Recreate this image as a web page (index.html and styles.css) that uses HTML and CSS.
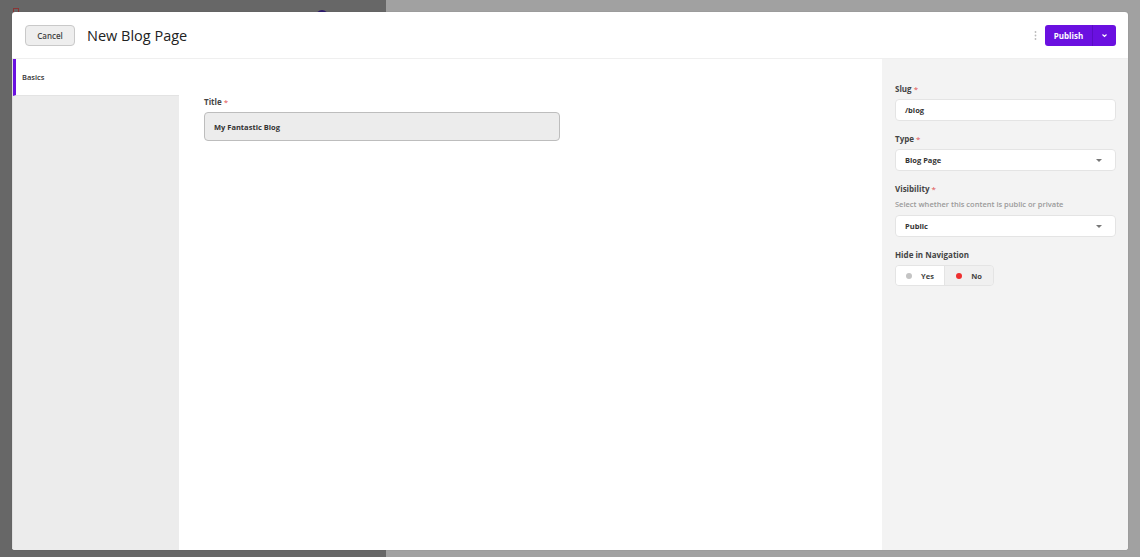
FILE: index.html
```html
<!DOCTYPE html>
<html lang="en">
<head>
  <meta charset="UTF-8" />
  <title>New Blog Page</title>
  <link rel="stylesheet" href="styles.css">
</head>
<body>

  <div class="backdrop">
    <div class="backdrop-left">
      <span class="bg-logo"></span>
      <span class="bg-avatar"></span>
    </div>
    <div class="backdrop-right"></div>
  </div>

  <div class="modal">
    <div class="modal-header">
      <button class="btn-cancel">Cancel</button>
      <h1>New Blog Page</h1>
      <div class="header-actions">
        <span class="kebab">
          <svg width="3" height="9" viewBox="0 0 3 9"><circle cx="1.5" cy="1" r="0.9" fill="#bbb"/><circle cx="1.5" cy="4.5" r="0.9" fill="#bbb"/><circle cx="1.5" cy="8" r="0.9" fill="#bbb"/></svg>
        </span>
        <div class="publish">
          <button class="publish-main">Publish</button>
          <button class="publish-caret">
            <svg width="7" height="5" viewBox="0 0 7 5"><path d="M1.5 1.5 L3.5 3.5 L5.5 1.5" stroke="#fff" stroke-width="1.1" fill="none"/></svg>
          </button>
        </div>
      </div>
    </div>

    <div class="modal-body">
      <div class="tabs">
        <div class="tab active">Basics</div>
      </div>

      <div class="main">
        <label class="field-label">Title <span class="req">*</span></label>
        <div class="title-input">My Fantastic Blog</div>
      </div>

      <div class="side">
        <div class="field">
          <label class="field-label">Slug <span class="req">*</span></label>
          <div class="input">/blog</div>
        </div>

        <div class="field">
          <label class="field-label">Type <span class="req">*</span></label>
          <div class="input select">Blog Page <span class="caret"></span></div>
        </div>

        <div class="field">
          <label class="field-label">Visibility <span class="req">*</span></label>
          <p class="help">Select whether this content is public or private</p>
          <div class="input select">Public <span class="caret"></span></div>
        </div>

        <div class="field">
          <label class="field-label">Hide in Navigation</label>
          <div class="toggle">
            <div class="toggle-opt"><span class="dot grey"></span>Yes</div>
            <div class="toggle-opt selected"><span class="dot red"></span>No</div>
          </div>
        </div>
      </div>
    </div>
  </div>

</body>
</html>
```

FILE: styles.css
```css
body {
  margin: 0;
  font-family: 'Open Sans', 'Noto Sans', sans-serif;
  color: #333;
  width: 1140px;
  height: 557px;
  overflow: hidden;
  position: relative;
}

.backdrop {
  display: flex;
  height: 557px;
}

.backdrop-left {
  width: 386px;
  background: #676767;
  position: relative;
}

.backdrop-right {
  flex: 1;
  background: #a1a1a1;
}

.bg-logo {
  position: absolute;
  left: 13px;
  top: 8px;
  width: 4px;
  height: 6px;
  border: 1px solid #8a3535;
}

.bg-avatar {
  position: absolute;
  left: 316px;
  top: 10px;
  width: 12px;
  height: 12px;
  border-radius: 50%;
  background: #2e1a6e;
}

.modal {
  position: absolute;
  left: 12px;
  top: 12px;
  width: 1116px;
  height: 538px;
  background: #fff;
  border-radius: 3px;
  display: flex;
  flex-direction: column;
  overflow: hidden;
  box-shadow: 0 0 1px rgba(0,0,0,0.3);
}

.modal-header {
  height: 46px;
  flex-shrink: 0;
  display: flex;
  align-items: center;
  padding: 0 12px 0 13px;
  border-bottom: 1px solid #efefef;
}

.btn-cancel {
  width: 50px;
  height: 21px;
  background: #eeeeee;
  border: 1px solid #c9c9c9;
  border-radius: 4px;
  font-family: inherit;
  font-size: 8px;
  font-weight: 600;
  color: #444;
  cursor: pointer;
  padding: 0;
}

h1 {
  margin: 0 0 0 12px;
  font-size: 14.5px;
  font-weight: 500;
  color: #222;
}

.header-actions {
  margin-left: auto;
  display: flex;
  align-items: center;
}

.kebab {
  display: flex;
  margin-right: 8px;
}

.publish {
  display: flex;
  height: 21px;
  background: #6a10e0;
  border-radius: 3px;
  overflow: hidden;
}

.publish button {
  background: none;
  border: none;
  color: #fff;
  font-family: inherit;
  font-size: 8px;
  font-weight: 700;
  cursor: pointer;
  padding: 0;
}

.publish-main {
  width: 48px;
  border-right: 1px solid #5a0cc4 !important;
}

.publish-caret {
  width: 23px;
  display: flex;
  align-items: center;
  justify-content: center;
}

.modal-body {
  flex: 1;
  display: flex;
}

.tabs {
  width: 167px;
  box-sizing: border-box;
  background: #ececec;
  flex-shrink: 0;
  border-left: 1px solid #e0e0e0;
}

.tab {
  height: 36px;
  display: flex;
  align-items: center;
  padding-left: 6px;
  font-size: 7.5px;
  font-weight: 600;
  color: #333;
  background: #fff;
  border-left: 3px solid #6a10e0;
  border-bottom: 1px solid #e3e3e3;
}

.main {
  flex: 1;
  padding: 37px 0 0 25px;
}

.field-label {
  display: block;
  font-size: 8px;
  font-weight: 700;
  color: #444;
  margin-bottom: 5px;
}

.req {
  color: #e05050;
  font-weight: 400;
}

.title-input {
  width: 356px;
  height: 29px;
  box-sizing: border-box;
  background: #ececec;
  border: 1px solid #bdbdbd;
  border-radius: 4px;
  padding-left: 9px;
  display: flex;
  align-items: center;
  font-size: 7.5px;
  font-weight: 700;
  color: #333;
}

.side {
  width: 246px;
  flex-shrink: 0;
  background: #f3f3f3;
  padding: 24px 12px 0 13px;
  box-sizing: border-box;
}

.field {
  margin-bottom: 12px;
}

.help {
  margin: 0 0 6px;
  font-size: 7.5px;
  font-weight: 600;
  color: #9a9a9a;
}

.input {
  height: 22px;
  box-sizing: border-box;
  background: #fff;
  border: 1px solid #e4e4e4;
  border-radius: 4px;
  padding-left: 9px;
  display: flex;
  align-items: center;
  font-size: 7.5px;
  font-weight: 700;
  color: #333;
  position: relative;
}

.caret {
  position: absolute;
  right: 13px;
  top: 9px;
  border-left: 3px solid transparent;
  border-right: 3px solid transparent;
  border-top: 3px solid #777;
}

.toggle {
  display: flex;
  width: 99px;
  height: 21px;
  border: 1px solid #e4e4e4;
  border-radius: 4px;
  overflow: hidden;
  box-sizing: border-box;
}

.toggle-opt {
  flex: 1;
  display: flex;
  align-items: center;
  justify-content: center;
  font-size: 7.5px;
  font-weight: 700;
  color: #444;
  background: #fff;
}

.toggle-opt.selected {
  background: #f0f0f0;
  border-left: 1px solid #e4e4e4;
}

.dot {
  width: 6px;
  height: 6px;
  border-radius: 50%;
  margin-right: 9px;
}

.dot.grey {
  background: #c4c4c4;
}

.dot.red {
  background: #ee2f2f;
}
```
